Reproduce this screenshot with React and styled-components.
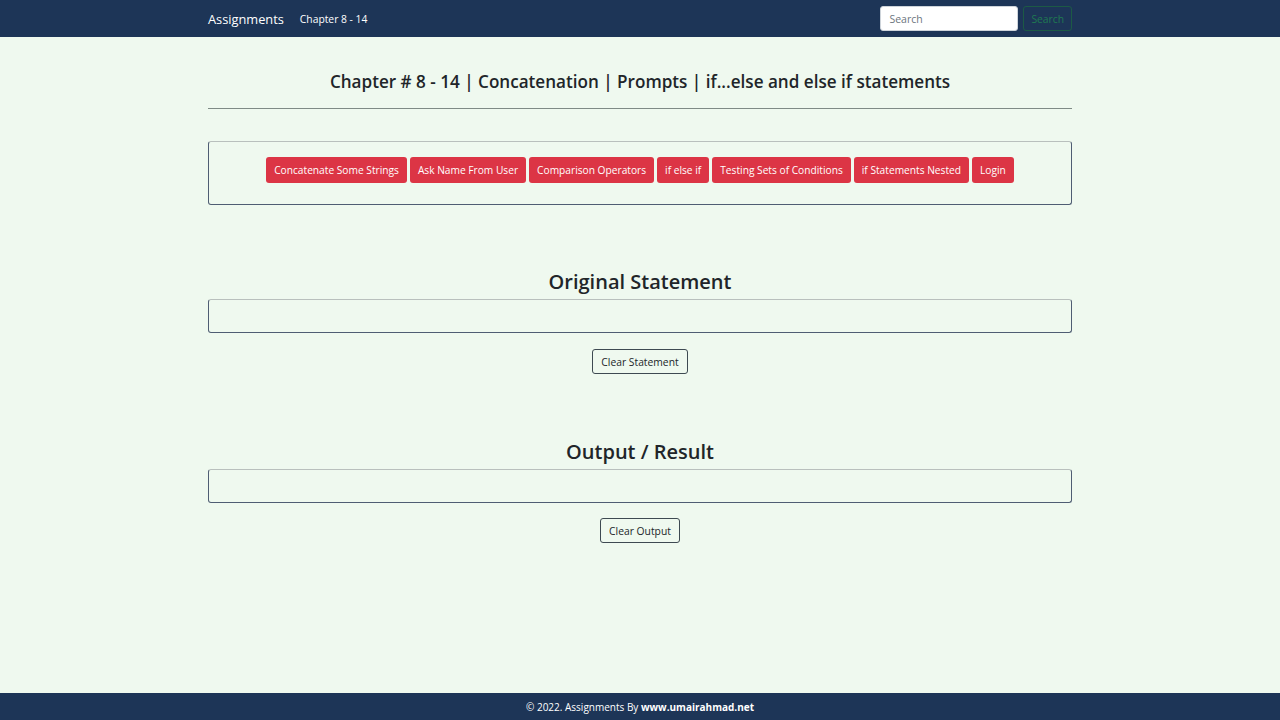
import React from 'react'
import styled, {createGlobalStyle} from 'styled-components'

const GlobalStyle = createGlobalStyle`
    html, body {
        margin: 0;
        padding: 0;
        height: 100%;
    }
    body {
        background: #eff9ef;
        font-family: "Open Sans", "Noto Sans", sans-serif;
        color: #212529;
    }
    #root {
        min-height: 100vh;
        display: flex;
        flex-direction: column;
    }
`

const Navbar = styled.nav`
    background: #1d3557;
    height: 37px;
    display: flex;
    justify-content: center;
`

const NavInner = styled.div`
    width: 864px;
    display: flex;
    align-items: center;
`

const Brand = styled.a`
    color: #fff;
    font-size: 12.8px;
    margin-right: 16px;
    text-decoration: none;
`

const NavLink = styled.a`
    color: #fff;
    font-size: 10.3px;
    text-decoration: none;
`

const SearchForm = styled.form`
    margin-left: auto;
    display: flex;
    gap: 5px;
`

const SearchInput = styled.input`
    width: 138px;
    height: 25px;
    box-sizing: border-box;
    border: 1px solid #ced4da;
    border-radius: 3px;
    padding: 0 8px;
    font-family: inherit;
    font-size: 10.5px;
    &::placeholder {
        color: #6c757d;
    }
`

const SearchButton = styled.button`
    height: 25px;
    padding: 0 7px;
    background: transparent;
    border: 1px solid #1c5a45;
    border-radius: 3px;
    color: #1f7a52;
    font-family: inherit;
    font-size: 10.3px;
`

const Main = styled.main`
    flex: 1;
    width: 864px;
    margin: 0 auto;
`

const Title = styled.h5`
    margin: 0;
    padding-top: 32px;
    text-align: center;
    font-size: 17.1px;
    font-weight: 600;
    line-height: 26px;
`

const Rule = styled.hr`
    margin: 13px 0 32px;
    border: 0;
    border-top: 1px solid #7f8b86;
`

const ButtonBox = styled.div`
    border: 1px solid #4f5d73;
    border-top-color: #b9c0bd;
    border-radius: 3px;
    height: 64px;
    box-sizing: border-box;
    padding-top: 15px;
    display: flex;
    align-items: flex-start;
    justify-content: center;
    gap: 3px;
`

const RedButton = styled.button`
    background: #dc3545;
    color: #fff;
    border: 0;
    border-radius: 3px;
    height: 26px;
    padding: 0 8px;
    font-family: inherit;
    font-size: 10.2px;
`

const Section = styled.section`
    margin-top: ${p => p.$top}px;
    display: flex;
    flex-direction: column;
    align-items: center;
`

const SectionTitle = styled.h3`
    margin: 0 0 3px;
    font-size: 20px;
    font-weight: 600;
    line-height: 28px;
`

const Field = styled.input`
    width: 100%;
    height: 34px;
    box-sizing: border-box;
    background: transparent;
    border: 1px solid #4f5d73;
    border-top-color: #b9c0bd;
    border-radius: 3px;
`

const ClearButton = styled.button`
    margin-top: ${p => p.$gap}px;
    height: 25px;
    padding: 0 8px;
    background: transparent;
    border: 1px solid #3e4a52;
    border-radius: 3px;
    color: #212529;
    font-family: inherit;
    font-size: 10.3px;
`

const Footer = styled.footer`
    background: #1d3557;
    height: 27px;
    display: flex;
    align-items: center;
    justify-content: center;
    color: #fff;
    font-size: 10px;
    b {
        font-weight: 700;
    }
`

const assignments = [
    'Concatenate Some Strings',
    'Ask Name From User',
    'Comparison Operators',
    'if else if',
    'Testing Sets of Conditions',
    'if Statements Nested',
    'Login',
]

export default function App() {
    return (
        <>
            <GlobalStyle />
            <Navbar>
                <NavInner>
                    <Brand href="#">Assignments</Brand>
                    <NavLink href="#">Chapter 8 - 14</NavLink>
                    <SearchForm onSubmit={e => e.preventDefault()}>
                        <SearchInput placeholder="Search" />
                        <SearchButton>Search</SearchButton>
                    </SearchForm>
                </NavInner>
            </Navbar>
            <Main>
                <Title>Chapter # 8 - 14 | Concatenation | Prompts | if...else and else if statements</Title>
                <Rule />
                <ButtonBox>
                    {assignments.map((a) => (
                        <RedButton key={a}>{a}</RedButton>
                    ))}
                </ButtonBox>
                <Section $top={63}>
                    <SectionTitle>Original Statement</SectionTitle>
                    <Field />
                    <ClearButton $gap={16}>Clear Statement</ClearButton>
                </Section>
                <Section $top={64}>
                    <SectionTitle>Output / Result</SectionTitle>
                    <Field />
                    <ClearButton $gap={15}>Clear Output</ClearButton>
                </Section>
            </Main>
            <Footer>© 2022. Assignments By&nbsp;<b>www.umairahmad.net</b></Footer>
        </>
    )
}
